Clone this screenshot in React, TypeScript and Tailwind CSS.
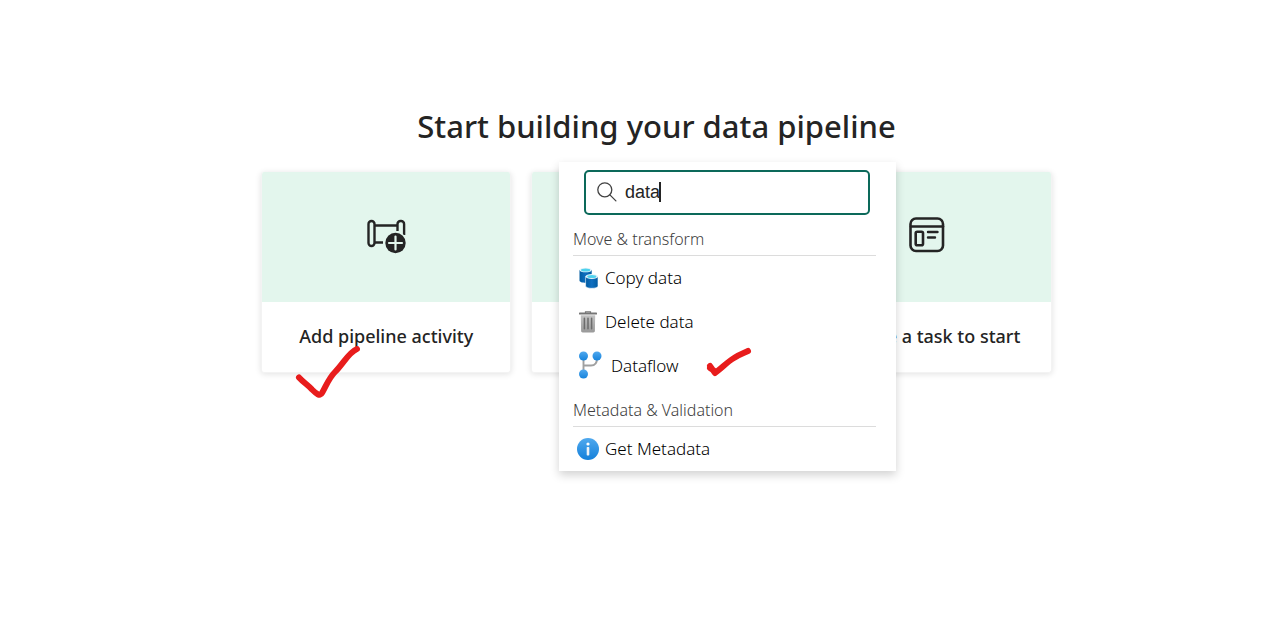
import { useState, type ReactNode } from "react";

function PipelineAddIcon() {
  return (
    <svg width="40" height="36" viewBox="-1 0 40 36" fill="none" stroke="#242424" strokeWidth="2.4" aria-hidden="true">
      <rect x="1.500" y="2" width="6" height="25" rx="3" />
      <path d="M8 6.500h23M8 23.500h8" strokeWidth="2.600" />
      <path d="M30.500 12V5a3 3 0 0 1 3-3h.6a3 3 0 0 1 3 3v11" />
      <circle cx="28.500" cy="24" r="11.500" fill="#e3f6ed" stroke="none" />
      <circle cx="28.500" cy="24" r="10.200" fill="#242424" stroke="none" />
      <path d="M28.500 17.500v13M22 24h13" stroke="#e3f6ed" strokeWidth="2.200" strokeLinecap="round" />
    </svg>
  );
}

function TemplateIcon() {
  return (
    <svg width="36" height="40" viewBox="0 0 36 40" fill="none" stroke="#242424" strokeWidth="2.600" strokeLinecap="round" aria-hidden="true">
      <rect x="1.500" y="1.500" width="32.500" height="32.500" rx="5.500" />
      <path d="M2 9.500h32" />
      <rect x="6.700" y="14.800" width="7.300" height="13.500" rx="1.500" />
      <path d="M19 15h9.500M19 20.500h7" strokeWidth="2.400" />
    </svg>
  );
}

function SearchIcon() {
  return (
    <svg width="20" height="20" viewBox="0 0 20 20" fill="none" stroke="#424242" strokeWidth="1.3" strokeLinecap="round" aria-hidden="true">
      <circle cx="7.800" cy="7.800" r="7" />
      <path d="M12.900 12.900l6 6" />
    </svg>
  );
}

function CopyDataIcon() {
  return (
    <svg width="20" height="22" viewBox="-1 0 20 22" aria-hidden="true">
      <defs>
        <linearGradient id="cylinder" x1="0" x2="1">
          <stop offset="0" stopColor="#005ba1" />
          <stop offset=".5" stopColor="#0f6fc0" />
          <stop offset="1" stopColor="#005ba1" />
        </linearGradient>
      </defs>
      <path d="M.5 3v10.500c0 1.300 2.500 2.300 6.200 2.300s6-1 6-2.300V3z" fill="url(#cylinder)" />
      <ellipse cx="6.600" cy="3" rx="6.100" ry="2.300" fill="#e6f3f8" />
      <ellipse cx="6.600" cy="3.100" rx="4.600" ry="1.500" fill="#4fd2ee" />
      <path d="M6.600 9.500v9.400c0 1.300 2.700 2.400 6.200 2.400s6.200-1.100 6.200-2.400V9.500z" fill="url(#cylinder)" stroke="#fff" strokeWidth=".6" />
      <ellipse cx="12.800" cy="9.500" rx="6.200" ry="2.400" fill="#e6f3f8" />
      <ellipse cx="12.800" cy="9.600" rx="4.600" ry="1.500" fill="#4fd2ee" />
    </svg>
  );
}

function TrashIcon() {
  return (
    <svg width="20" height="22" viewBox="0 0 20 22" aria-hidden="true">
      <defs>
        <linearGradient id="bin" x1="0" x2="0" y1="0" y2="1">
          <stop offset="0" stopColor="#c4c4c4" />
          <stop offset="1" stopColor="#999" />
        </linearGradient>
      </defs>
      <path d="M7.500 2.500V.8h5v1.700" fill="none" stroke="#767676" strokeWidth="1.200" />
      <rect x="1" y="1.600" width="18" height="1.900" rx=".6" fill="#767676" />
      <path d="M2.800 4.200h14.400l-.3 15.600c0 1-.7 1.700-1.600 1.700H4.700c-.9 0-1.600-.7-1.600-1.700z" fill="url(#bin)" />
      <path d="M6.400 7.200v10.500M10 7.200v10.500M13.600 7.200v10.500" stroke="#6c6c6c" strokeWidth="1.500" strokeLinecap="round" />
    </svg>
  );
}

function DataflowIcon() {
  return (
    <svg width="24" height="30" viewBox="0 0 24 30" aria-hidden="true">
      <defs>
        <linearGradient id="node" x1="0" x2="0" y1="0" y2="1">
          <stop offset="0" stopColor="#50a8ee" />
          <stop offset="1" stopColor="#1683dc" />
        </linearGradient>
      </defs>
      <path d="M5.500 6v16M5.500 14.500h7.500c4 0 6-2 6-7" fill="none" stroke="#a0a0a0" strokeWidth="1.900" />
      <circle cx="5.500" cy="5" r="4.500" fill="url(#node)" />
      <circle cx="19" cy="5" r="4.500" fill="url(#node)" />
      <circle cx="5.500" cy="23" r="4.500" fill="url(#node)" />
    </svg>
  );
}

function InfoIcon() {
  return (
    <svg width="22" height="22" viewBox="0 0 22 22" aria-hidden="true">
      <defs>
        <linearGradient id="info" x1="0" x2="0" y1="0" y2="1">
          <stop offset="0" stopColor="#50a9ee" />
          <stop offset="1" stopColor="#1480da" />
        </linearGradient>
      </defs>
      <circle cx="11" cy="11" r="11" fill="url(#info)" />
      <circle cx="11" cy="6" r="1.600" fill="#fff" />
      <rect x="9.700" y="9" width="2.600" height="8.500" rx=".7" fill="#f0f4f8" />
    </svg>
  );
}

function StartCard({ icon, label }: { icon?: ReactNode; label?: string }) {
  return (
    <button
      type="button"
      aria-label={label ?? "Copy data"}
      className="flex flex-1 flex-col overflow-hidden rounded-[3px] border border-t-0 border-[#f3f3f3] bg-white text-center shadow-[0_1px_6px_rgba(0,0,0,0.12)]"
    >
      <span className="flex h-[130px] w-full items-center justify-center bg-[#e3f6ed]">{icon}</span>
      <span className="flex h-[70px] w-full items-center justify-center pb-0.5 text-lg font-medium whitespace-nowrap">{label}</span>
    </button>
  );
}

function SectionTitle({ children }: { children: ReactNode }) {
  return <h2 className="mr-5 ml-3.5 border-b border-[#dcdcdc] pt-1.5 text-base leading-8 font-light text-[#404040]">{children}</h2>;
}

function MenuItem({ icon, label, wide = false }: { icon: ReactNode; label: string; wide?: boolean }) {
  return (
    <li>
      <button type="button" className={`flex h-11 w-full items-center text-left text-[17px] font-light text-black ${wide ? "gap-2 pl-[18px]" : "gap-[5px] pl-[17px]"}`}>
        <span className={wide ? "flex w-[26px] justify-center" : "flex w-6 justify-center"}>{icon}</span>
        {label}
      </button>
    </li>
  );
}

function ActivityMenu() {
  const [query, setQuery] = useState("data");
  return (
    <div className="absolute -top-[10px] left-[298px] w-[337px] bg-white shadow-[0_4px_9px_rgba(0,0,0,0.18)]">
      <div className="pt-2 pr-[26px] pb-0.5 pl-[25px]">
        <label className="relative flex h-[45px] items-center gap-2 rounded-[5px] border-2 border-[#0c695a] pb-0.5 pl-[11px]">
          <SearchIcon />
          <input
            type="text"
            aria-label="Search activities"
            value={query}
            onChange={(e) => setQuery(e.target.value)}
            className="min-w-0 flex-1 bg-transparent font-['Liberation_Sans',sans-serif] text-lg outline-none"
          />
          <span className="absolute top-2.5 left-[73px] h-5 w-0.5 bg-[#242424]" />
        </label>
      </div>
      <SectionTitle>Move &amp; transform</SectionTitle>
      <ul>
        <MenuItem icon={<CopyDataIcon />} label="Copy data" />
        <MenuItem icon={<TrashIcon />} label="Delete data" />
        <MenuItem icon={<DataflowIcon />} label="Dataflow" wide />
      </ul>
      <SectionTitle>Metadata &amp; Validation</SectionTitle>
      <ul>
        <MenuItem icon={<InfoIcon />} label="Get Metadata" />
      </ul>
    </div>
  );
}

export default function App() {
  return (
    <main className="flex min-h-screen flex-col items-center bg-white pt-[104px] pl-[35px] font-['Noto_Sans','Open_Sans',sans-serif] text-[#242424]">
      <h1 className="text-[31px] leading-11 font-medium whitespace-nowrap">Start building your data pipeline</h1>
      <section className="relative mt-6 flex w-full max-w-[791px] gap-5">
        <StartCard icon={<PipelineAddIcon />} label="Add pipeline activity" />
        <StartCard />
        <StartCard icon={<TemplateIcon />} label="Choose a task to start" />
        <ActivityMenu />
        <svg className="absolute top-[172px] left-[34px]" width="68" height="56" viewBox="0 0 68 56" fill="none" stroke="#e81c1c" strokeWidth="6" strokeLinecap="round" strokeLinejoin="round" aria-hidden="true">
          <path d="M4 33.500C9 39 13 41 17 45.500C21 49.500 25 53 27 49C32 40 34 34 40 28C48 20 54 8 62 5" />
        </svg>
        <svg className="absolute top-[174px] left-[443px]" width="50" height="34" viewBox="0 0 50 34" fill="none" stroke="#e81c1c" strokeWidth="6" strokeLinecap="round" strokeLinejoin="round" aria-hidden="true">
          <path d="M6 20L11 27C17 23 23 16 30 12C36 8 40 7 44 5M6 22l6 4" />
        </svg>
      </section>
    </main>
  );
}
